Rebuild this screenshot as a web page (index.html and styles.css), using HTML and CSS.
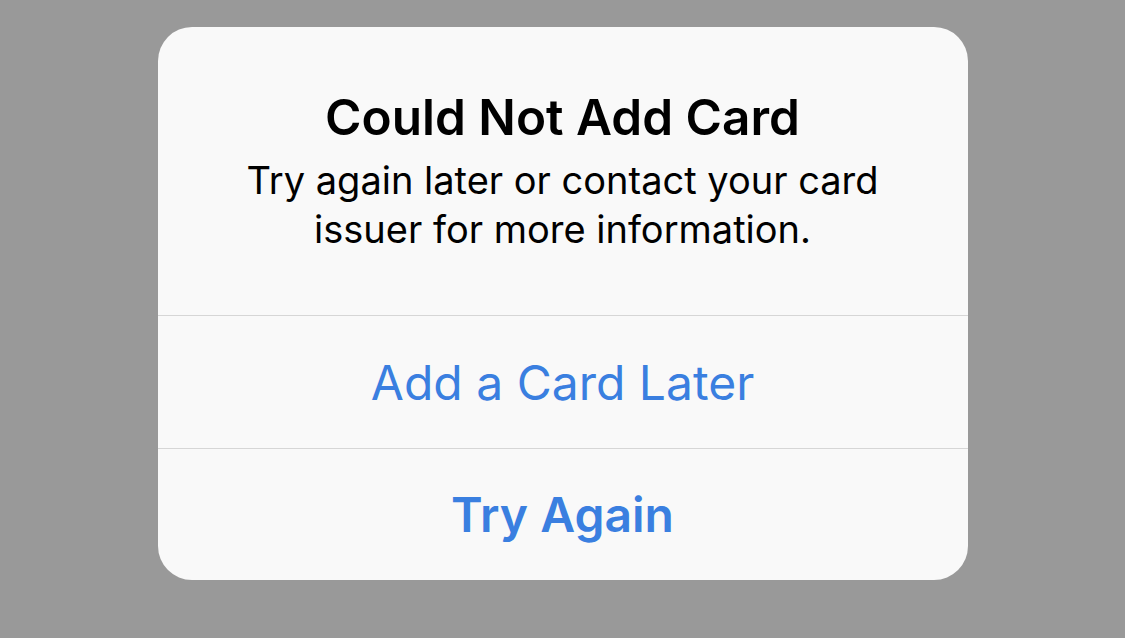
FILE: index.html
```html
<!DOCTYPE html>
<html lang="en">
    <head>
        <meta charset="UTF-8">
        <meta name="viewport" content="width=device-width, initial-scale=1.0">
        <title>Could Not Add Card</title>
        <link rel="stylesheet" href="styles.css">
    </head>
    <body>
        <div class="alert">
            <div class="alert-body">
                <h1 class="alert-title">Could Not Add Card</h1>
                <p class="alert-message">Try again later or contact your card<br>issuer for more information.</p>
            </div>
            <button class="alert-action">Add a Card Later</button>
            <button class="alert-action alert-action-bold">Try Again</button>
        </div>
    </body>
</html>
```

FILE: styles.css
```css
html, body {
    margin: 0;
    padding: 0;
    height: 100%;
}

body {
    background-color: #999999;
    font-family: Inter, "Noto Sans", sans-serif;
    display: flex;
    justify-content: center;
    align-items: flex-start;
    padding-top: 27px;
    box-sizing: border-box;
}

.alert {
    width: 810px;
    background-color: #f9f9f9;
    border-radius: 34px;
    overflow: hidden;
    display: flex;
    flex-direction: column;
}

.alert-body {
    height: 288px;
    box-sizing: border-box;
    padding-top: 61px;
    text-align: center;
}

.alert-title {
    margin: 0;
    font-size: 49.5px;
    font-weight: 600;
    color: #000;
    line-height: 59px;
}

.alert-message {
    margin: 9px 0 0;
    font-size: 38px;
    font-weight: 400;
    color: #000;
    line-height: 49px;
}

.alert-action {
    height: 133px;
    border: none;
    border-top: 1px solid #d6d6d6;
    background: none;
    font-family: inherit;
    font-size: 48px;
    font-weight: 400;
    color: #3a7fe0;
    padding: 0;
    cursor: pointer;
}

.alert-action-bold {
    font-weight: 600;
    height: 132px;
}
```
